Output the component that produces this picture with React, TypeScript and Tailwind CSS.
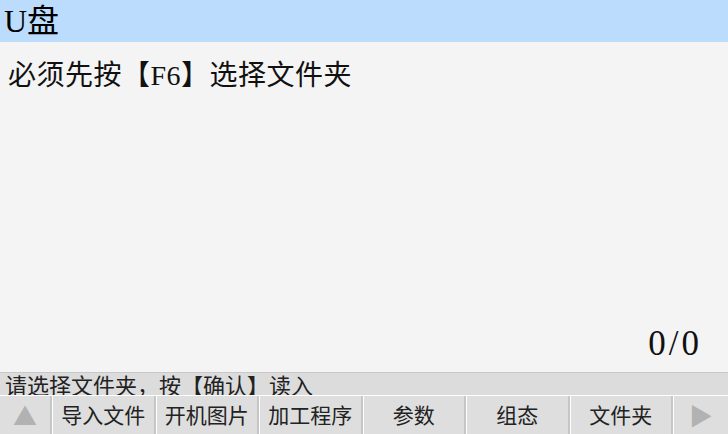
import React from 'react';

const serif = "font-['Liberation_Serif','Noto_Sans_CJK_SC',serif]";
const sans = "font-['Noto_Sans_CJK_SC','Noto_Sans',sans-serif]";

const tabs = ['导入文件', '开机图片', '加工程序', '参数', '组态', '文件夹'];

const App: React.FC = () => {
  return (
    <div className="w-[728px] h-[434px] flex flex-col bg-[#f4f4f4] overflow-hidden">
      {/* Title */}
      <div className={`h-[42px] bg-[#bbdcfd] flex items-center px-[4px] text-[32px] leading-[40px] text-black ${serif}`}>
        U盘
      </div>

      {/* Content */}
      <div className="flex-1 flex flex-col px-[8px] pt-[18px] pb-[10px]">
        <div className={`text-[28px] leading-[32px] tracking-[0.5px] text-[#111] ${serif}`}>必须先按【F6】选择文件夹</div>
        <div className="flex-1" />
        <div className={`self-end pr-[18px] text-[35px] leading-[36px] tracking-[3px] text-[#111] ${serif}`}>0/0</div>
      </div>

      {/* Status line */}
      <div className={`h-[23px] bg-[#dcdcdc] border-t border-[#c8c8c8] px-[5px] text-[22px] leading-[22px] text-[#222] ${sans}`}>
        请选择文件夹，按【确认】读入
      </div>

      {/* Soft keys */}
      <div className={`h-[39px] flex bg-[#dedede] border-t border-white ${sans}`}>
        <div className="w-[52px] flex items-center justify-center border-r-2 border-r-[#c6c6c6]">
          <span className="text-[24px] text-[#b2b2b2]">▲</span>
        </div>
        {tabs.map((t) => (
          <div
            key={t}
            className="w-[103.5px] flex items-center justify-center border-l border-l-white border-r-2 border-r-[#c6c6c6] text-[21px] text-[#222]"
          >
            {t}
          </div>
        ))}
        <div className="flex-1 flex items-center justify-center border-l border-l-white">
          <span className="text-[24px] text-[#b2b2b2]">▶</span>
        </div>
      </div>
    </div>
  );
};

export default App;
